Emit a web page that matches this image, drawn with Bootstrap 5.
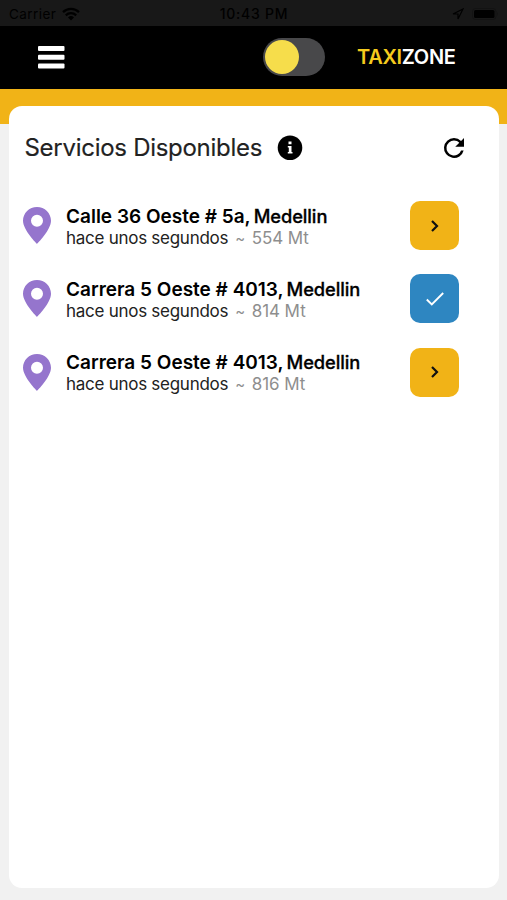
<!DOCTYPE html>
<html lang="es">
<head>
<meta charset="utf-8">
<meta name="viewport" content="width=device-width, initial-scale=1">
<title>TaxiZone</title>
<link href="https://cdn.jsdelivr.net/npm/bootstrap@5.3.0/dist/css/bootstrap.min.css" rel="stylesheet">
<style>
body{font-family:Inter,"Liberation Sans",sans-serif;background:#f1f1f1;height:900px;overflow:hidden;color:#000}
svg{display:block;flex:none}
.statusbar{height:25.5px;background:#181818;font-size:13.5px;padding:2px 8px 0 9px;line-height:24px}
.statusbar>div{flex:1 1 0}
.carrier{letter-spacing:.45px}
.wifi{margin-left:6px}
.clock{font-weight:500;font-size:14px;letter-spacing:.75px}
.topbar{height:63px;background:#000;padding:0 52px 0 38px}
.menu-btn{line-height:0}
.switch{width:62px;height:38px;border-radius:19px;background:#48484a;padding:0 2px}
.knob{width:34px;height:34px;border-radius:50%;background:#f6dd4b}
.brand{font-size:20px;font-weight:600;line-height:24px;margin-left:32px;width:98px;letter-spacing:-.3px;color:#fff}
.brand span{color:#f5cb1d}
.band{height:35.5px;background:#f1b317;padding:17.5px 8px 0 8.5px}
.panel{height:782px;border-radius:13px;background:#fff;border:0;padding:24px 40px 0 14.5px}
.title{font-size:24px;line-height:36px;font-weight:400;color:#222;width:253.5px;letter-spacing:-.28px;padding-left:1.5px;-webkit-text-stroke:.15px #222}
.heading{height:36px;margin-bottom:35px}
.reload{margin-right:-10px}
.service{height:49px;margin-bottom:24.4px}
.text-col{padding-left:15px;padding-top:2px}
.address{font-size:19px;line-height:23px;font-weight:600;letter-spacing:0}
.address span{font-size:18.3px;font-weight:500;margin-left:3px;-webkit-text-stroke:.3px #000;letter-spacing:-.08px}
.ago{font-size:17px;line-height:21px;color:#222;letter-spacing:-.27px}
.ago span{color:#8e8e8e}
.ago .dist{letter-spacing:-.1px;margin-left:7px}
.ago .tilde{font-size:15px;margin-left:7px}
.tile{width:49px;height:49px;border-radius:10px;background:#f1b317}
.tile.done{background:#2e86c1}
</style>
<script src="https://cdn.jsdelivr.net/npm/bootstrap@5.3.0/dist/js/bootstrap.bundle.min.js"></script>
</head>
<body>
<svg width="0" height="0" class="d-none">
<symbol id="pin" viewBox="0 0 28 37"><path fill="#9575cd" fill-rule="evenodd" d="M14 0C6.200 0 0 6.100 0 13.800 0 23 14 37 14 37s14-14 14-23.200C28 6.100 21.800 0 14 0zm0 19.800a6 6 0 1 1 0-12 6 6 0 0 1 0 12z"/></symbol>
<symbol id="next" viewBox="0 0 16 16"><path d="M5 3l5 5-5 5" fill="none" stroke="#111" stroke-width="2.200"/></symbol>
<symbol id="check" viewBox="0 0 18 14"><path d="M.8 7.500l5 5L17.200 1" fill="none" stroke="#fff" stroke-width="1.900"/></symbol>
</svg>
<header>
<div class="statusbar d-flex">
<div class="d-flex align-items-center"><span class="carrier">Carrier</span>
<svg width="18" height="14" viewBox="0 0 18 14" class="wifi"><g fill="none" stroke="#000" stroke-width="2.300"><path d="M1 5.200a11.500 11.500 0 0 1 16 0M3.800 8.300a7.500 7.500 0 0 1 10.400 0"/></g><path d="M9 13.500l-3-3a4.300 4.300 0 0 1 6 0z"/></svg></div>
<div class="text-center clock"><span>10:43 PM</span></div>
<div class="d-flex align-items-center justify-content-end gap-1">
<svg width="12" height="12" viewBox="0 0 12 12" class="me-1"><path d="M1 6l10-5-5 10V6z" fill="none" stroke="#000" stroke-width="1.200"/></svg>
<svg width="27" height="12" viewBox="0 0 27 12"><rect x=".5" y=".5" width="23.500" height="11" rx="3" fill="none" stroke="#131313"/><rect x="2" y="2" width="20.500" height="8" rx="1.500"/><path d="M25.200 4v4q1.300-2 0-4" fill="#101010"/></svg></div>
</div>
<nav class="topbar d-flex align-items-center">
<button class="menu-btn btn p-0 border-0" aria-label="Menú"><svg width="27" height="23" viewBox="0 0 27 23" fill="#fff"><rect width="26.500" height="5" rx="1"/><rect y="8.800" width="26.500" height="5" rx="1"/><rect y="17.600" width="26.500" height="5" rx="1"/></svg></button>
<div class="switch d-flex align-items-center ms-auto"><div class="knob"></div></div>
<div class="brand text-nowrap"><span>TAXI</span>ZONE</div>
</nav>
</header>
<main class="band">
<section class="panel card">
<div class="heading d-flex align-items-center">
<h1 class="title m-0 text-nowrap">Servicios Disponibles</h1>
<svg width="26" height="26" viewBox="0 0 26 26"><circle cx="13" cy="12.700" r="12.300"/><path fill="#fff" d="M11.500 6.500h3v2.800h-3zM10.800 11h3.700v6h1v1.600h-4.700V17h1v-4.400h-1z"/></svg>
<svg class="reload ms-auto" width="30" height="30" viewBox="0 0 24 24"><path d="M17.650 6.350A7.960 7.960 0 0 0 12 4a8 8 0 1 0 7.730 10h-2.080A6 6 0 1 1 12 6c1.660 0 3.140.69 4.220 1.780L13 11h7V4z"/></svg>
</div>
<div class="service d-flex align-items-center"><svg width="28" height="37"><use href="#pin"/></svg><div class="text-col text-nowrap"><div class="address">Calle 36 Oeste # 5a,<span>Medellin</span></div><div class="ago">hace unos segundos<span class="tilde">~</span><span class="dist">554 Mt</span></div></div><div class="tile d-flex align-items-center justify-content-center ms-auto"><svg width="16" height="16"><use href="#next"/></svg></div></div>
<div class="service d-flex align-items-center"><svg width="28" height="37"><use href="#pin"/></svg><div class="text-col text-nowrap"><div class="address">Carrera 5 Oeste # 4013,<span>Medellin</span></div><div class="ago">hace unos segundos<span class="tilde">~</span><span class="dist">814 Mt</span></div></div><div class="tile done d-flex align-items-center justify-content-center ms-auto"><svg width="18" height="14"><use href="#check"/></svg></div></div>
<div class="service d-flex align-items-center"><svg width="28" height="37"><use href="#pin"/></svg><div class="text-col text-nowrap"><div class="address">Carrera 5 Oeste # 4013,<span>Medellin</span></div><div class="ago">hace unos segundos<span class="tilde">~</span><span class="dist">816 Mt</span></div></div><div class="tile d-flex align-items-center justify-content-center ms-auto"><svg width="16" height="16"><use href="#next"/></svg></div></div>
</section>
</main>
</body>
</html>
